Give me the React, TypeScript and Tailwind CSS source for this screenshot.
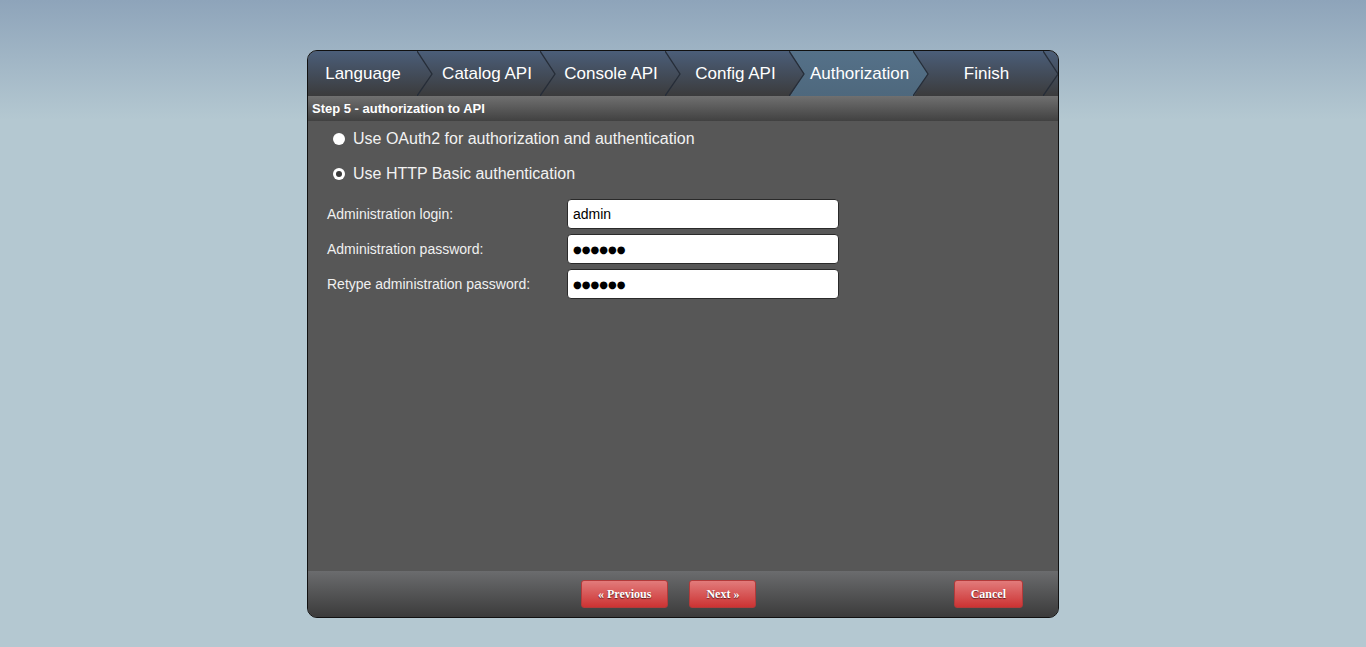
import React from "react";

interface Step {
  label: string;
  width: number;
  active?: boolean;
}

const steps: Step[] = [
  { label: "Language", width: 110 },
  { label: "Catalog API", width: 123 },
  { label: "Console API", width: 125 },
  { label: "Config API", width: 124 },
  { label: "Authorization", width: 124, active: true },
  { label: "Finish", width: 130 },
];

const fields = [
  { label: "Administration login:", value: "admin", secret: false },
  { label: "Administration password:", value: "●●●●●●", secret: true },
  { label: "Retype administration password:", value: "●●●●●●", secret: true },
];

function Chevron() {
  return (
    <svg width="16" height="45" viewBox="0 0 16 45" className="absolute right-[-15px] top-0 z-20">
      <polyline points="0,0 15,23 0,45" fill="none" stroke="#262d38" strokeWidth="1.3" />
    </svg>
  );
}

function StepTab({ step, first }: { step: Step; first: boolean }) {
  return (
    <div
      className={`relative h-full shrink-0 flex items-center justify-center ${first ? "" : "pl-[15px]"}`}
      style={{ width: step.width }}
    >
      {step.active && (
        <div className="absolute left-0 top-0 h-full w-[138px] z-10 bg-[linear-gradient(to_bottom,#557189,#4e687d)] [clip-path:polygon(0_0,124px_0,138px_50%,124px_100%,0_100%,14px_50%)]" />
      )}
      <span className="relative z-20 text-[17px] text-white whitespace-nowrap">{step.label}</span>
      <Chevron />
    </div>
  );
}

function Radio({ checked, label }: { checked?: boolean; label: string }) {
  return (
    <div className="flex items-center h-[35px] pl-[25px]">
      {checked ? (
        <span className="w-[12px] h-[12px] rounded-full bg-white flex items-center justify-center">
          <span className="w-[6px] h-[6px] rounded-full bg-[#3a3a3a]" />
        </span>
      ) : (
        <span className="w-[12px] h-[12px] rounded-full bg-white" />
      )}
      <span className="ml-[8px] text-[16px] text-[#f2f2f2]">{label}</span>
    </div>
  );
}

function RedButton({ children }: { children: React.ReactNode }) {
  return (
    <button className="h-[28px] px-[16px] rounded-[3px] border border-[#b23a3a] bg-[linear-gradient(to_bottom,#e27b7b,#cc3333)] text-white text-[12px] font-bold [font-family:'Liberation_Serif',serif] [text-shadow:0_1px_1px_rgba(0,0,0,0.6)]">
      {children}
    </button>
  );
}

export default function App() {
  return (
    <div className="min-h-screen pt-[50px] bg-[linear-gradient(to_bottom,#8ea4ba_0px,#b4c8d1_120px,#b4c8d1_100%)] [font-family:'Liberation_Sans',Arial,sans-serif]">
      <div className="mx-auto w-[752px] h-[568px] rounded-[10px] border border-[#111] overflow-hidden flex flex-col bg-[#575757]">
        {/* wizard steps */}
        <div className="h-[45px] shrink-0 flex bg-[linear-gradient(to_bottom,#4b5e79,#3b3b3c)] overflow-hidden">
          {steps.map((s, i) => (
            <StepTab key={s.label} step={s} first={i === 0} />
          ))}
        </div>

        <div className="h-[25px] shrink-0 flex items-center pl-[4px] bg-[linear-gradient(to_bottom,#707070,#414141)]">
          <span className="text-[13px] font-bold text-white">Step 5 - authorization to API</span>
        </div>

        <div className="flex-1">
          <Radio label="Use OAuth2 for authorization and authentication" />
          <Radio checked label="Use HTTP Basic authentication" />

          <div className="mt-[8px] flex flex-col gap-[5px]">
            {fields.map((f) => (
              <div key={f.label} className="flex items-center h-[30px] pl-[19px]">
                <span className="w-[240px] text-[14px] text-[#f0f0f0]">{f.label}</span>
                <input
                  type="text"
                  defaultValue={f.value}
                  readOnly
                  className={`w-[272px] h-[30px] rounded-[4px] border border-[#2a2a2a] bg-white px-[5px] text-black outline-none ${
                    f.secret ? "text-[10px] [font-family:'DejaVu_Sans',sans-serif]" : "text-[14px]"
                  }`}
                />
              </div>
            ))}
          </div>
        </div>

        <div className="h-[46px] shrink-0 flex items-center bg-[linear-gradient(to_bottom,#6b6c6e,#3b3b3b)]">
          <div className="ml-[273px] flex gap-[21px]">
            <RedButton>« Previous</RedButton>
            <RedButton>Next »</RedButton>
          </div>
          <div className="ml-auto mr-[35px]">
            <RedButton>Cancel</RedButton>
          </div>
        </div>
      </div>
    </div>
  );
}
